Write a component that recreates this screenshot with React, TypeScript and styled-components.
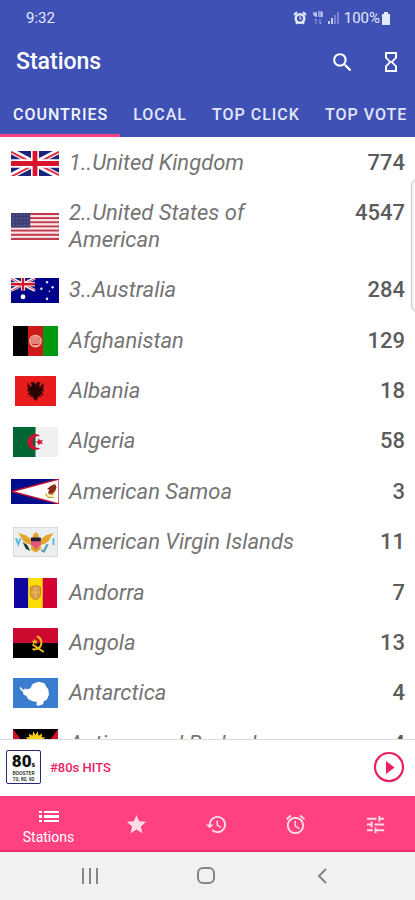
import React from "react";
import styled, { createGlobalStyle } from "styled-components";

const Global = createGlobalStyle`
  * { box-sizing: border-box; }
  body { margin: 0; background: #fff; font-family: Roboto, "Liberation Sans", sans-serif; }
  button { border: 0; padding: 0; background: none; color: inherit; font: inherit; cursor: pointer; }
  svg { display: block; flex: none; }
`;

const Screen = styled.div`
  position: relative;
  display: flex;
  flex-direction: column;
  height: 100vh;
  overflow: hidden;
`;

const Header = styled.header`
  flex: none;
  background: #3f51b5;
  color: #fff;
`;

const StatusBar = styled.div`
  display: flex;
  align-items: center;
  justify-content: space-between;
  height: 36px;
  padding: 0 24px 0 26px;
  font-size: 15px;
  color: #e4e8fb;
`;

const StatusIcons = styled.div`
  display: flex;
  align-items: center;
`;

const Gap = styled.span<{ $w: number }>`
  width: ${(p) => p.$w}px;
`;

const Toolbar = styled.div`
  display: flex;
  align-items: center;
  height: 52px;
  padding: 0 12px 0 16px;
`;

const Title = styled.h1`
  flex: 1;
  margin: 0;
  font-size: 23px;
  line-height: 28px;
  font-weight: 500;
`;

const Actions = styled.div`
  display: flex;
  gap: 24px;
`;

const IconButton = styled.button`
  display: flex;
  align-items: center;
  justify-content: center;
`;

const Tabs = styled.div`
  display: flex;
  height: 49px;
  overflow: hidden;
`;

const Tab = styled.button<{ $active?: boolean }>`
  flex: none;
  padding: 6px 12px 0 13px;
  border-bottom: 3px solid ${(p) => (p.$active ? "#ff4081" : "transparent")};
  font-size: 16px;
  font-weight: 500;
  letter-spacing: 1px;
  color: ${(p) => (p.$active ? "#f4f5ff" : "#e3e7fb")};
`;

const List = styled.ul`
  flex: 1;
  min-height: 0;
  margin: 0;
  padding: 1px 0 0;
  list-style: none;
  overflow-y: auto;
  scrollbar-width: none;
`;

const Row = styled.li`
  display: grid;
  grid-template-columns: 48px 1fr auto;
  column-gap: 10px;
  align-items: center;
  padding: 12px 10px 12px 11px;
  font-size: 22px;
  line-height: 1.2;
  color: #5c5c5c;
`;

const FlagBox = styled.span`
  display: flex;
  justify-content: center;
  height: 0;
  align-items: center;
`;

const Country = styled.span`
  max-width: 236px;
  font-style: italic;
  font-weight: 400;
  color: #747474;
`;

const Count = styled.span`
  align-self: start;
  font-weight: 500;
`;

const EdgeHandle = styled.div`
  position: absolute;
  top: 179px;
  right: -8px;
  width: 12px;
  height: 133px;
  border: 1px solid #c4c4c4;
  border-radius: 6px;
  background: #f5f5f5;
`;

const Player = styled.section`
  flex: none;
  display: flex;
  align-items: center;
  gap: 9px;
  height: 57px;
  padding: 0 10px 2px 6px;
  border-top: 1px solid #dcdcdc;
  color: #e91e63;
`;

const Cover = styled.div`
  display: flex;
  flex-direction: column;
  align-items: center;
  width: 35px;
  height: 34px;
  padding-top: 1px;
  border: 1px solid #26267c;
  border-radius: 2px;
  background: #fff;
  color: #111;
`;

const CoverTitle = styled.span`
  height: 18px;
  font-size: 17px;
  line-height: 18px;
  font-weight: 900;
  small { font-size: 7px; line-height: 8px; }
`;

const CoverLine = styled.span`
  font-size: 5px;
  line-height: 6px;
  font-weight: 500;
  white-space: nowrap;
`;

const TrackName = styled.span`
  flex: 1;
  font-size: 13px;
  font-weight: 500;
`;

const BottomNav = styled.nav`
  flex: none;
  display: flex;
  height: 56px;
  background: #ff4081;
  border-bottom: 2px solid #ef2c70;
  color: #fbdce7;
`;

const NavItem = styled.button<{ $active?: boolean }>`
  flex: ${(p) => (p.$active ? "0 0 97px" : "1 1 0")};
  display: flex;
  flex-direction: column;
  align-items: center;
  justify-content: center;
  gap: 6px;
  padding-top: ${(p) => (p.$active ? "8px" : "2px")};
  font-size: 14px;
  line-height: 16px;
  color: ${(p) => (p.$active ? "#fff" : "inherit")};
`;

const SystemNav = styled.nav`
  flex: none;
  display: grid;
  grid-template-columns: repeat(3, 116px);
  justify-content: center;
  height: 48px;
  padding-right: 4px;
  background: #f1f1f1;
  color: #858585;
`;

type IconProps = { d: string; w: number; h?: number; box?: string };
const Icon = ({ d, w, h = w, box = "0 0 24 24" }: IconProps) => (
  <svg width={w} height={h} viewBox={box} fill="currentColor" aria-hidden="true">
    <path d={d} />
  </svg>
);

const paths = {
  search:
    "M15.5 14h-.79l-.28-.27A6.471 6.471 0 0 0 16 9.5 6.5 6.5 0 1 0 9.5 16c1.61 0 3.09-.59 4.23-1.57l.27.28v.79l5 4.99L20.49 19l-4.99-5zm-6 0C7.01 14 5 11.99 5 9.5S7.01 5 9.5 5 14 7.01 14 9.5 11.99 14 9.5 14z",
  hourglass:
    "M6 2v6h.01L6 8.01 10 12l-4 4 .01.01H6V22h12v-5.99h-.01L18 16l-4-4 4-3.99-.01-.01H18V2H6zm10 14.5V20H8v-3.5l4-4 4 4zm-4-5l-4-4V4h8v3.5l-4 4z",
  star: "M12 17.27L18.18 21l-1.64-7.03L22 9.24l-7.19-.61L12 2 9.19 8.63 2 9.24l5.46 4.73L5.82 21z",
  history:
    "M13 3c-4.97 0-9 4.03-9 9H1l3.89 3.89.07.14L9 12H6c0-3.87 3.13-7 7-7s7 3.13 7 7-3.13 7-7 7c-1.93 0-3.68-.79-4.94-2.06l-1.42 1.42C8.27 19.99 10.51 21 13 21c4.97 0 9-4.03 9-9s-4.03-9-9-9zm-1 5v5l4.28 2.54.72-1.21-3.5-2.08V8H12z",
  alarm:
    "M22 5.72l-4.6-3.86-1.29 1.53 4.6 3.86L22 5.72zM7.88 3.39L6.6 1.86 2 5.71l1.29 1.53 4.59-3.85zM12.5 8H11v6l4.75 2.85.75-1.23-4-2.37V8zM12 4c-4.97 0-9 4.03-9 9s4.02 9 9 9a9 9 0 0 0 0-18zm0 16c-3.87 0-7-3.13-7-7s3.13-7 7-7 7 3.13 7 7-3.13 7-7 7z",
  tune: "M3 17v2h6v-2H3zM3 5v2h10V5H3zm10 16v-2h8v-2h-8v-2h-2v6h2zM7 9v2H3v2h4v2h2V9H7zm14 4v-2H11v2h10zm-6-4h2V7h4V5h-4V3h-2v6z",
};

const Stripes = ({ colors, vertical }: { colors: string[]; vertical?: boolean }) => (
  <>
    {colors.map((c, i) =>
      vertical ? (
        <rect key={i} x={(i * 60) / colors.length} width={60 / colors.length + 0.1} height="40" fill={c} />
      ) : (
        <rect key={i} y={(i * 40) / colors.length} width="60" height={40 / colors.length + 0.1} fill={c} />
      )
    )}
  </>
);

const Union = () => (
  <>
    <rect width="60" height="30" fill="#1a237e" />
    <path d="M0 0L60 30M60 0L0 30" stroke="#fff" strokeWidth="7" />
    <path d="M0 1L28 15M60 1L32 15M0 31L28 17M60 29L32 15" stroke="#dc3040" strokeWidth="2.4" />
    <path d="M30 0V30M0 15H60" stroke="#fff" strokeWidth="10" />
    <path d="M30 0V30M0 15H60" stroke="#d8142c" strokeWidth="6" />
  </>
);

type FlagDef = { w: number; h: number; box: string; art: React.ReactNode };

const flags: Record<string, FlagDef> = {
  gb: { w: 48, h: 25, box: "0 0 60 30", art: <Union /> },
  us: {
    w: 48, h: 27, box: "0 0 60 40",
    art: (
      <>
        <Stripes colors={Array.from({ length: 13 }, (_, i) => (i % 2 ? "#f6e4e6" : "#c2384b"))} />
        <rect width="24" height="21.5" fill="#3f3f78" />
        {Array.from({ length: 20 }, (_, i) => (
          <circle key={i} cx={3 + (i % 5) * 4.5} cy={3 + Math.floor(i / 5) * 5} r="0.8" fill="#7778a5" />
        ))}
      </>
    ),
  },
  au: {
    w: 48, h: 25, box: "0 0 60 30",
    art: (
      <>
        <rect width="60" height="30" fill="#00008b" />
        <g transform="scale(.5)"><Union /></g>
        <circle cx="15" cy="22.5" r="3" fill="#fff" />
        <g fill="#e6e8ff">
          <circle cx="45" cy="5" r="1.5" /><circle cx="38" cy="13" r="1.5" />
          <circle cx="52" cy="11" r="1.5" /><circle cx="45" cy="25" r="1.6" /><circle cx="48" cy="16" r="1" />
        </g>
      </>
    ),
  },
  af: {
    w: 45, h: 30, box: "0 0 60 40",
    art: (
      <>
        <Stripes vertical colors={["#000", "#cf1a1a", "#009a10"]} />
        <circle cx="30" cy="20" r="7.5" fill="none" stroke="#f0b5a5" strokeWidth="2" />
        <path d="M25 23h10v-5l-2-3h-6l-2 3zM27 26h6M30 12v4" fill="#e08070" stroke="#f0b5a5" />
      </>
    ),
  },
  al: {
    w: 41, h: 30, box: "0 0 56 40",
    art: (
      <>
        <rect width="56" height="40" fill="#e81c1c" />
        <path d="M28 12l-2-4-5 1 2 3-1 3-5-6v6l2 1-2 1v4l3-1-3 6 5-2-2 4 4-1 1 3 3 3 3-3 1-3 4 1-2-4 5 2-3-6 3 1v-4l-2-1 2-1V9l-5 6-1-3 2-3-5-1z" fill="#2a0505" />
      </>
    ),
  },
  dz: {
    w: 45, h: 30, box: "0 0 60 40",
    art: (
      <>
        <rect width="60" height="40" fill="#f0f0f0" />
        <rect width="30" height="40" fill="#006633" />
        <path d="M37 12.500a10.500 10.500 0 1 0 0 15 8 8 0 1 1 0-15z" fill="#d21034" />
        <path d="M29 20l4-1 1-4 2 3 4-1-2 3 2 3-4-1-2 3-1-4z" fill="#d21034" />
      </>
    ),
  },
  as: {
    w: 48, h: 25, box: "0 0 60 30",
    art: (
      <>
        <rect width="60" height="30" fill="#000e8c" />
        <path d="M60 0L1 15l59 15z" fill="#fff" stroke="#c01030" strokeWidth="1.6" />
        <path d="M55 6l-5 2-5 4 3 1-2 4 5 1 4-3 2-5z" fill="#8c2a16" />
        <path d="M43 18l4 4h7M46 18l6 1 2-3" stroke="#d9a520" strokeWidth="1.5" fill="none" />
      </>
    ),
  },
  vi: {
    w: 45, h: 30, box: "0 0 60 40",
    art: (
      <>
        <rect x=".5" y=".5" width="59" height="39" fill="#eceef0" stroke="#cfcfcf" />
        <path d="M7 8l10 3 8 6 2-7 3-3 4 2v3l2 5 8-6 10-3-4 6-2 4-5 4-6 2v6l-7 4-6-4v-6l-6-2-5-4-2-4z" fill="#e2a62c" />
        <path d="M24 15h13v8l-6 7-7-7z" fill="#e0567c" /><path d="M24 14h13v5H24z" fill="#231c38" />
        <path d="M13 20l6 4 4 8-6-3z" fill="#153b27" />
        <path d="M41 33l5-10M38 31l4 2" stroke="#5b9fb8" strokeWidth="3" />
        <path d="M4 15l3 8 3-8M54 15v9" fill="none" stroke="#4bb9d3" strokeWidth="2.4" />
      </>
    ),
  },
  ad: {
    w: 43, h: 30, box: "0 0 60 40",
    art: (
      <>
        <Stripes vertical colors={["#10069f", "#fedd00", "#d50032"]} />
        <path d="M23 12q7-4 14 0v9q0 6-7 8-7-2-7-8z" fill="#dc9a55" stroke="#b3702f" />
        <path d="M30 11v17M24 19h12" stroke="#eeb84f" strokeWidth="2" />
      </>
    ),
  },
  ao: {
    w: 45, h: 30, box: "0 0 60 40",
    art: (
      <>
        <Stripes colors={["#cc092f", "#000"]} />
        <path d="M32 11a9 9 0 1 1-6 17M26 22l15 10" stroke="#f2c21a" strokeWidth="2.6" fill="none" />
        <path d="M29 14l1 3h3l-2 2 1 3-3-2-3 2 1-3-2-2h3z" fill="#f2c21a" />
      </>
    ),
  },
  aq: {
    w: 45, h: 30, box: "0 0 60 40",
    art: (
      <>
        <rect width="60" height="40" fill="#3a7dce" />
        <path d="M9 11l5 5 2-1-1-2 3 2 5-1 3-6 8-3 8 2 2 4 3 4 1 7-3 7-4 2-1 4-6 2-3-1 1-4-6-1-6-3-2-4-4-2-1-4-3-2z" fill="#fff" />
      </>
    ),
  },
  ag: {
    w: 45, h: 30, box: "0 0 60 40",
    art: (
      <>
        <rect width="60" height="40" fill="#ce1126" />
        <path d="M0 0h60L30 40z" fill="#000" />
        <path d="M10 17h40l-7 9H17z" fill="#0072c6" />
        <path d="M18 17l2-3-3-3 5 0-1-5 5 3 1-6 3 5 3-5 1 6 5-3-1 5 5 0-3 3 2 3z" fill="#fcd116" />
      </>
    ),
  },
};

const countries = [
  { flag: "gb", name: "1..United Kingdom", count: 774 },
  { flag: "us", name: "2..United States of American", count: 4547 },
  { flag: "au", name: "3..Australia", count: 284 },
  { flag: "af", name: "Afghanistan", count: 129 },
  { flag: "al", name: "Albania", count: 18 },
  { flag: "dz", name: "Algeria", count: 58 },
  { flag: "as", name: "American Samoa", count: 3 },
  { flag: "vi", name: "American Virgin Islands", count: 11 },
  { flag: "ad", name: "Andorra", count: 7 },
  { flag: "ao", name: "Angola", count: 13 },
  { flag: "aq", name: "Antarctica", count: 4 },
  { flag: "ag", name: "Antigua and Barbuda", count: 4 },
];

const Flag = ({ code }: { code: string }) => {
  const f = flags[code];
  return (
    <FlagBox>
      <svg width={f.w} height={f.h} viewBox={f.box} preserveAspectRatio="none" aria-hidden="true">{f.art}</svg>
    </FlagBox>
  );
};

const navItems = [
  { label: "Favorites", d: paths.star },
  { label: "History", d: paths.history },
  { label: "Alarm", d: paths.alarm },
  { label: "Settings", d: paths.tune },
];

export default function App() {
  return (
    <>
      <Global />
      <Screen>
        <Header>
          <StatusBar>
            <span>9:32</span>
            <StatusIcons>
              <svg width="14" height="14" viewBox="0 0 14 14" fill="none" stroke="currentColor">
                <circle cx="7" cy="7.5" r="4.3" strokeWidth="2.4" />
                <path d="M1 4l3-3M13 4l-3-3M3 13l1.500-2M11 13l-1.500-2" strokeWidth="2" />
                <path d="M7 5v3h2" />
              </svg>
              <Gap $w={6} />
              <svg width="10" height="14" viewBox="0 0 10 14" fill="none" stroke="currentColor">
                <path d="M1 1v3h3M3 1v5M5 1h4M5 3h4M5 5h4M9 1v5" strokeWidth="1.200" />
                <path d="M3 8v5M1.500 9.500L3 8M7 8v5M8.500 11.500L7 13" opacity=".5" />
              </svg>
              <Gap $w={5} />
              <svg width="11" height="12" viewBox="0 0 11 12" fill="currentColor">
                <path d="M0 9h2v3H0zM3 6h2v6H3z" opacity=".8" />
                <path d="M6 3h2v9H6zM9 0h2v12H9z" opacity=".35" />
              </svg>
              <Gap $w={5} />
              <span>100%</span>
              <Gap $w={1} />
              <svg width="10" height="13" viewBox="0 0 10 13" fill="currentColor">
                <path d="M3 0h4v2h2v11H1V2h2z" />
              </svg>
            </StatusIcons>
          </StatusBar>
          <Toolbar>
            <Title>Stations</Title>
            <Actions>
              <IconButton aria-label="Search"><Icon d={paths.search} w={25} /></IconButton>
              <IconButton aria-label="Sleep timer"><Icon d={paths.hourglass} w={24} /></IconButton>
            </Actions>
          </Toolbar>
          <Tabs role="tablist">
            <Tab role="tab" aria-selected="true" $active>COUNTRIES</Tab>
            <Tab role="tab" aria-selected="false">LOCAL</Tab>
            <Tab role="tab" aria-selected="false">TOP CLICK</Tab>
            <Tab role="tab" aria-selected="false">TOP VOTE</Tab>
          </Tabs>
        </Header>
        <List>
          {countries.map((c) => (
            <Row key={c.flag}>
              <Flag code={c.flag} />
              <Country>{c.name}</Country>
              <Count>{c.count}</Count>
            </Row>
          ))}
        </List>
        <Player>
          <Cover>
            <CoverTitle>80<small>s</small></CoverTitle>
            <CoverLine>BOOSTER</CoverLine>
            <CoverLine>70, 80, 90</CoverLine>
          </Cover>
          <TrackName>#80s HITS</TrackName>
          <IconButton aria-label="Play">
            <svg width="32" height="32" viewBox="0 0 32 32">
              <circle cx="16" cy="16" r="14" fill="none" stroke="currentColor" strokeWidth="2.200" />
              <path d="M13 10v13l8.500-6.500z" fill="currentColor" />
            </svg>
          </IconButton>
        </Player>
        <BottomNav>
          <NavItem $active>
            <Icon w={20} h={13} box="0 0 20 13" d="M0 1h3v2H0zM5 1h15v2H5zM0 5h3v3H0zM5 5h15v3H5zM0 10h3v2H0zM5 10h15v2H5z" />
            Stations
          </NavItem>
          {navItems.map((n) => (
            <NavItem key={n.label} aria-label={n.label}><Icon d={n.d} w={23} /></NavItem>
          ))}
        </BottomNav>
        <SystemNav>
          <IconButton aria-label="Recent apps">
            <svg width="16" height="16" viewBox="0 0 16 16" stroke="currentColor" strokeWidth="2"><path d="M1 0v16M8 0v16M15 0v16" /></svg>
          </IconButton>
          <IconButton aria-label="Home">
            <svg width="18" height="18" viewBox="0 0 18 18" fill="none" stroke="currentColor" strokeWidth="2"><rect x="1" y="1" width="16" height="15" rx="5" /></svg>
          </IconButton>
          <IconButton aria-label="Back">
            <svg width="10" height="16" viewBox="0 0 10 16" fill="none" stroke="currentColor" strokeWidth="2"><path d="M9 1L2 8l7 7" /></svg>
          </IconButton>
        </SystemNav>
        <EdgeHandle />
      </Screen>
    </>
  );
}
